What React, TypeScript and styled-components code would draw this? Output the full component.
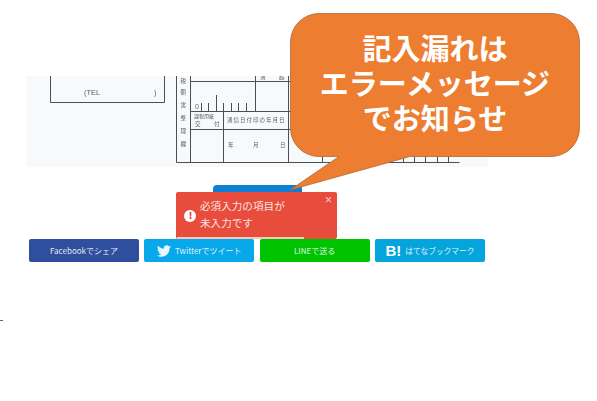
import styled, { createGlobalStyle } from 'styled-components';
import { FaTwitter, FaExclamation } from 'react-icons/fa';

const GlobalStyle = createGlobalStyle`
  html, body {
    margin: 0;
    padding: 0;
    background: #fff;
    font-family: 'Noto Sans CJK JP', 'Noto Sans', sans-serif;
  }
`;

const Page = styled.div`
  position: relative;
  width: 597px;
  height: 401px;
  overflow: hidden;
  padding-top: 76px;
  box-sizing: border-box;
`;

const FormPanel = styled.div`
  width: 462px;
  height: 91px;
  margin-left: 26px;
  background: #f8f9fb;
  filter: blur(0.4px);
  & > svg {
    display: block;
  }
`;

const SubmitRow = styled.div`
  display: flex;
  justify-content: center;
  width: 462px;
  margin: 18px 0 18px 26px;
`;

const SubmitButton = styled.div`
  width: 89px;
  height: 36px;
  border-radius: 4px;
  background: #0d7fd4;
`;

const ShareRow = styled.div`
  display: flex;
  gap: 5.3px;
  margin-left: 29px;
`;

const ShareButton = styled.a<{ $bg: string }>`
  display: flex;
  align-items: center;
  justify-content: center;
  gap: 4px;
  width: 110px;
  height: 23px;
  border-radius: 2px;
  background: ${({ $bg }) => $bg};
  color: rgba(255, 255, 255, 0.9);
  font-size: 8px;
  white-space: nowrap;
`;

const HatenaMark = styled.span`
  color: #fff;
  font-family: 'Liberation Sans', sans-serif;
  font-size: 15px;
  font-weight: 700;
`;

const HatenaLabel = styled.span`
  font-size: 7.7px;
`;

const Toast = styled.div`
  position: absolute;
  left: 176px;
  top: 192px;
  width: 161px;
  height: 47px;
  box-sizing: border-box;
  display: flex;
  align-items: center;
  gap: 4px;
  padding: 0 0 3px 8px;
  border-radius: 2px;
  background: #e74c3c;
  color: #fbe3e0;
  font-size: 10.6px;
  line-height: 17px;

  &::after {
    content: '';
    position: absolute;
    left: 1px;
    bottom: 0;
    width: 127px;
    height: 2px;
    background: #f2cdbf;
  }
`;

const ToastIcon = styled.span`
  display: flex;
  align-items: center;
  justify-content: center;
  width: 12px;
  height: 12px;
  margin-top: 3px;
  border-radius: 50%;
  background: #fff;
  color: #e74c3c;
  font-size: 7px;
`;

const ToastClose = styled.span`
  position: absolute;
  right: 5px;
  top: 1px;
  font-size: 12px;
  line-height: 14px;
  color: #f8d5d0;
  font-family: 'Liberation Sans', sans-serif;
`;

const Callout = styled.div`
  position: absolute;
  left: 285px;
  top: 10px;
  width: 300px;
  height: 185px;
  & > svg {
    position: absolute;
    inset: 0;
  }
`;

const CalloutText = styled.div`
  position: relative;
  height: 144px;
  display: flex;
  flex-direction: column;
  align-items: center;
  justify-content: center;
  color: #fff;
  font-size: 29px;
  font-weight: 700;
  line-height: 35px;
  white-space: nowrap;
`;

const Speck = styled.div`
  position: absolute;
  left: 0;
  top: 320px;
  width: 3px;
  height: 1px;
  background: linear-gradient(90deg, #e03030, #30a040, #3050e0);
`;

const ink = '#4c5055';

const FormDrawing = () => (
  <svg width="462" height="91" viewBox="26 76 462 91" fill="none" stroke={ink} strokeWidth="1">
    <path d="M50.5 76V102.5H164.5V76" />
    <path d="M176.5 76V162.5H459.5" />
    <path d="M190.5 76V162.5M223.5 111V162.5M288.5 76V162.5M255.5 76V111" />
    <path d="M190 81.5H460M190 111.5H460M190 129.5H460" />
    <path d="M201.5 103V111M208.5 103V111M216.5 95V111M223.5 103V111M231.5 103V111M238.5 103V111M246.5 103V111" />
    <path d="M322.5 156V162.5M403.5 156V162.5M414.5 156V162.5M425.5 156V162.5M437.5 156V162.5M448.5 156V162.5" />
    <g fill="#5a5e63" stroke="none" fontSize="5.5" fontFamily="'Noto Sans CJK JP', sans-serif">
      <text x="84" y="95" fontSize="7.5" fontFamily="'Liberation Sans', sans-serif">(TEL</text>
      <text x="154" y="95" fontSize="7.5" fontFamily="'Liberation Sans', sans-serif">)</text>
      <text x="180.5" y="83">税</text>
      <text x="180.5" y="94">額</text>
      <text x="180.5" y="107">寓</text>
      <text x="180.5" y="120">整</text>
      <text x="180.5" y="133">理</text>
      <text x="180.5" y="146">欄</text>
      <text x="195" y="109" fontSize="7" fontFamily="'Liberation Sans', sans-serif">0</text>
      <text x="194" y="118" fontSize="5">課税用紙</text>
      <text x="195" y="126" fontSize="5.5">交</text>
      <text x="214" y="126" fontSize="5.5">付</text>
      <text x="227" y="122" letterSpacing="1">通信日付印の年月日</text>
      <text x="228" y="147">年</text>
      <text x="253" y="147">月</text>
      <text x="280" y="147">日</text>
      <text x="260" y="79">通</text>
      <text x="279" y="79">超</text>
    </g>
  </svg>
);

const CalloutShape = () => (
  <svg width="300" height="185" viewBox="285 10 300 185">
    <path
      d="M319 13.5H551A28.5 28.5 0 0 1 579.5 42V128A28.5 28.5 0 0 1 551 156.5H410L290 190L339 156.5H319A28.5 28.5 0 0 1 290.5 128V42A28.5 28.5 0 0 1 319 13.5Z"
      fill="#ed7d31"
      stroke="#ae6a38"
      strokeWidth="0.8"
    />
  </svg>
);

export default function App() {
  return (
    <Page>
      <GlobalStyle />
      <FormPanel>
        <FormDrawing />
      </FormPanel>
      <SubmitRow>
        <SubmitButton />
      </SubmitRow>
      <ShareRow>
        <ShareButton $bg="#2f4f9e">Facebookでシェア</ShareButton>
        <ShareButton $bg="#08a9ea">
          <FaTwitter size={14} />
          Twitterでツイート
        </ShareButton>
        <ShareButton $bg="#00c300">LINEで送る</ShareButton>
        <ShareButton $bg="#04a5dc">
          <HatenaMark>B!</HatenaMark>
          <HatenaLabel>はてなブックマーク</HatenaLabel>
        </ShareButton>
      </ShareRow>
      <Toast>
        <ToastIcon>
          <FaExclamation />
        </ToastIcon>
        <div>
          必須入力の項目が
          <br />
          未入力です
        </div>
        <ToastClose>×</ToastClose>
      </Toast>
      <Callout>
        <CalloutShape />
        <CalloutText>
          <span>記入漏れは</span>
          <span>エラーメッセージ</span>
          <span>でお知らせ</span>
        </CalloutText>
      </Callout>
      <Speck />
    </Page>
  );
}
